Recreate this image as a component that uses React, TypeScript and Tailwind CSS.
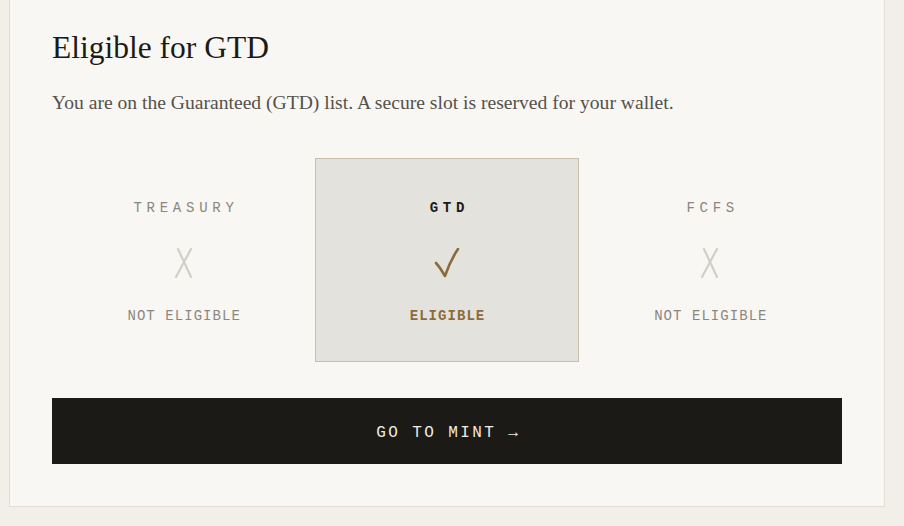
import React from 'react';

type Tier = {
  name: string;
  eligible: boolean;
};

const tiers: Tier[] = [
  { name: 'TREASURY', eligible: false },
  { name: 'GTD', eligible: true },
  { name: 'FCFS', eligible: false },
];

const Cross = () => (
  <svg width="22" height="30" viewBox="0 0 22 30" fill="none">
    <path d="M5 1 L18 29 M18 1 L3 29" stroke="#d2cfc9" strokeWidth="2.2" strokeLinecap="round" />
  </svg>
);

const Check = () => (
  <svg width="26" height="30" viewBox="0 0 26 30" fill="none">
    <path
      d="M2 15 C5 18 8 23 11 28 C14 19 18 10 24 1"
      stroke="#8b6b3c"
      strokeWidth="2.6"
      strokeLinecap="round"
      strokeLinejoin="round"
    />
  </svg>
);

const TierCell: React.FC<{ tier: Tier }> = ({ tier }) => (
  <div
    className={`flex flex-col items-center h-[204px] ${
      tier.eligible ? 'bg-[#e4e2dc] border border-[#c9bfad]' : 'border border-transparent'
    }`}
  >
    <div
      className={`mt-[41px] h-4 leading-4 text-[14px] tracking-[0.34em] pl-[0.34em] ${
        tier.eligible ? 'font-bold text-[#1c1a17]' : 'text-[#8a8680]'
      }`}
    >
      {tier.name}
    </div>
    <div className="mt-[32px] h-[30px] flex items-center justify-center">
      {tier.eligible ? <Check /> : <Cross />}
    </div>
    <div
      className={`mt-[30px] h-4 leading-4 text-[14px] tracking-[0.075em] pl-[0.075em] ${
        tier.eligible ? 'font-bold text-[#8b6b3c]' : 'text-[#8a8680]'
      }`}
    >
      {tier.eligible ? 'ELIGIBLE' : 'NOT ELIGIBLE'}
    </div>
  </div>
);

export default function App() {
  return (
    <div className="min-h-[526px] w-full bg-[#f2efe8] pl-[9px] pr-[19px] pb-[18px]">
      <div className="bg-[#f8f7f3] border border-t-0 border-[#e2ded4] px-[42px] pt-[30px] pb-[42px]">
        <h2 className="text-[31.5px] leading-[36px] text-[#1c1a17] [font-family:'Liberation_Serif',serif]">
          Eligible for GTD
        </h2>
        <p className="mt-[22px] text-[19.6px] leading-[30px] text-[#55514b] [font-family:'Liberation_Serif',serif]">
          You are on the Guaranteed (GTD) list. A secure slot is reserved for your wallet.
        </p>

        <div className="mt-[40px] grid grid-cols-3 [font-family:'Liberation_Mono',monospace]">
          {tiers.map((t) => (
            <TierCell key={t.name} tier={t} />
          ))}
        </div>

        <button className="mt-[36px] w-full h-[66px] pt-[3px] bg-[#1c1a16] text-[#f0ece2] text-[16px] tracking-[0.15em] pl-[0.15em] [font-family:'Liberation_Mono',monospace] flex items-center justify-center">
          GO TO MINT →
        </button>
      </div>
    </div>
  );
}
